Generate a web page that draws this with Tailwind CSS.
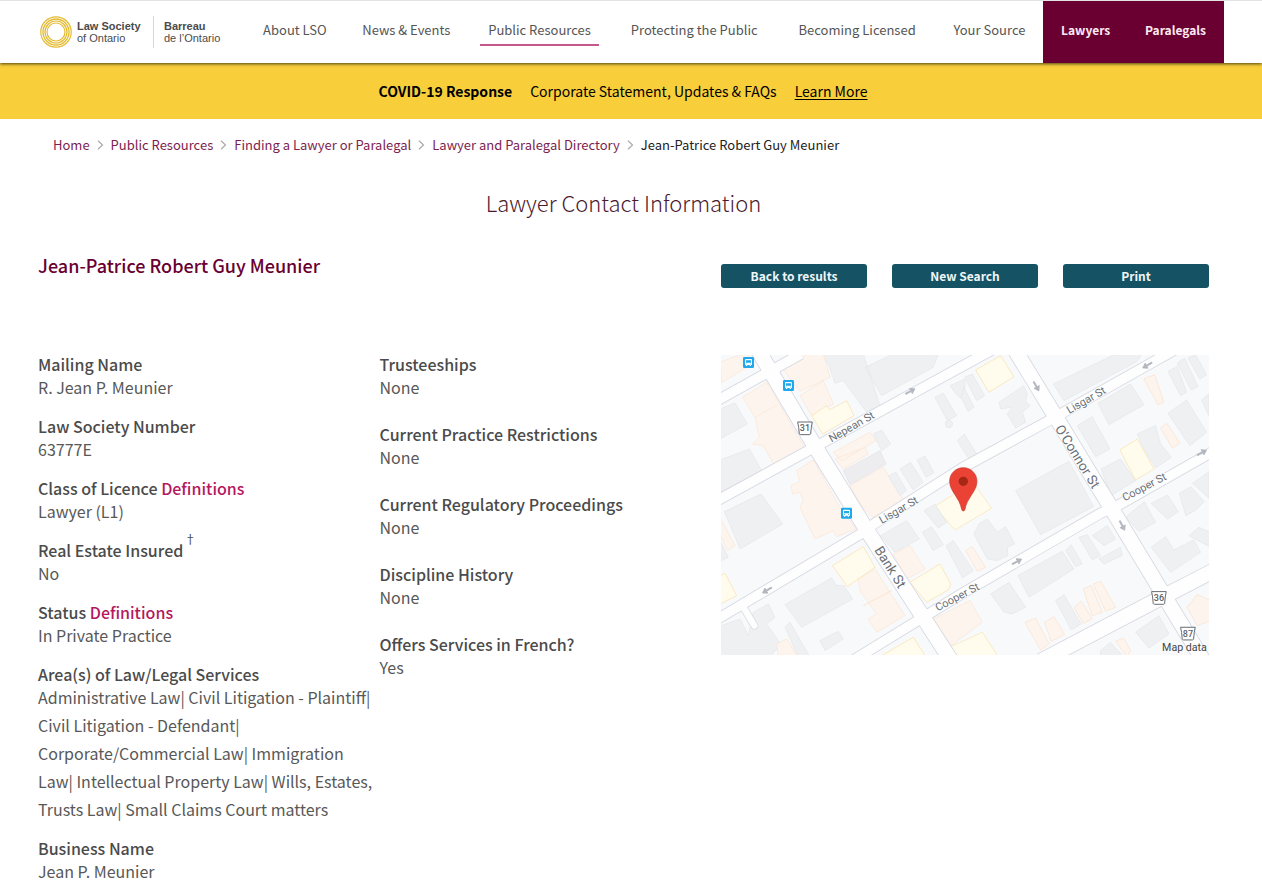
<!DOCTYPE html>
<html lang="en">
<head>
<meta charset="utf-8">
<meta name="viewport" content="width=device-width, initial-scale=1">
<title>Lawyer Contact Information</title>
<script src="https://cdn.jsdelivr.net/npm/@tailwindcss/browser@4"></script>
</head>
<body class="bg-white font-['Noto_Sans_CJK_SC','Noto_Sans',sans-serif] text-[#4b4b4b]">

<header class="relative z-10 flex h-[63px] items-stretch border-t border-[#e3e3e3] bg-white pl-10 pr-[38px] shadow-[0_1px_3px_rgba(0,0,0,0.7)]">
  <a href="#" class="flex w-[206px] shrink-0 items-center font-['Liberation_Sans',Arial,sans-serif] text-xs leading-3" aria-label="Law Society of Ontario">
    <svg class="size-8 shrink-0" viewBox="0 0 32 32" fill="none" stroke="#e3bb33" aria-hidden="true">
      <circle cx="16" cy="16" r="15.2" stroke-width="1.2"/>
      <circle cx="16" cy="16" r="13" stroke-width="1.3"/>
      <circle cx="16" cy="16" r="11" stroke-width="1.2"/>
      <circle cx="16" cy="16" r="9" stroke-width="1.2"/>
    </svg>
    <span class="ml-[5px] w-[66px] whitespace-nowrap text-[11px]"><b class="block">Law Society</b><span class="block">of Ontario</span></span>
    <span class="ml-[10px] h-8 border-l border-[#d5d5d5]"></span>
    <span class="ml-[10px] whitespace-nowrap text-[11px]"><b class="block">Barreau</b><span class="block">de l’Ontario</span></span>
  </a>
  <nav class="flex-1" aria-label="Main">
    <ul class="table h-full w-full whitespace-nowrap text-center text-[13px] leading-5 text-[#555]">
      <li class="table-cell px-3 pt-[19px]"><a href="#">About LSO</a></li>
      <li class="table-cell px-3 pt-[19px]"><a href="#">News &amp; Events</a></li>
      <li class="table-cell px-3 pt-[19px]"><a href="#" class="-mx-2 inline-block border-b-2 border-[#c4588a] px-2 pb-1">Public Resources</a></li>
      <li class="table-cell px-3 pt-[19px]"><a href="#">Protecting the Public</a></li>
      <li class="table-cell px-3 pt-[19px]"><a href="#">Becoming Licensed</a></li>
      <li class="table-cell px-3 pt-[19px]"><a href="#">Your Source</a></li>
    </ul>
  </nav>
  <div class="flex w-[181px] shrink-0 justify-between bg-[#690031] px-[18px] pt-[19px] text-xs font-bold leading-5 text-[#fbeaf2]">
    <a href="#" class="leading-5">Lawyers</a>
    <a href="#" class="leading-5">Paralegals</a>
  </div>
</header>

<section class="flex h-14 items-center justify-center gap-[18px] bg-[#f8ce3b] pr-4 text-sm text-black">
  <strong class="font-bold">COVID-19 Response</strong>
  <span>Corporate Statement, Updates &amp; FAQs</span>
  <a href="#" class="underline underline-offset-2">Learn More</a>
</section>

<main class="pl-[38px] pr-[53px]">
  <nav aria-label="Breadcrumb" class="pt-4 pl-[15px]">
    <ol class="flex items-center gap-[7px] text-[13px] leading-5 text-[#7c1e50]">
      <li><a href="#">Home</a></li>
      <li aria-hidden="true"><svg class="h-2.5 w-[7px]" viewBox="0 0 7 10" fill="none" stroke="#aaa" stroke-width="1.2"><path d="M1 .8 5.5 5 1 9.2"/></svg></li>
      <li><a href="#">Public Resources</a></li>
      <li aria-hidden="true"><svg class="h-2.5 w-[7px]" viewBox="0 0 7 10" fill="none" stroke="#aaa" stroke-width="1.2"><path d="M1 .8 5.5 5 1 9.2"/></svg></li>
      <li><a href="#">Finding a Lawyer or Paralegal</a></li>
      <li aria-hidden="true"><svg class="h-2.5 w-[7px]" viewBox="0 0 7 10" fill="none" stroke="#aaa" stroke-width="1.2"><path d="M1 .8 5.5 5 1 9.2"/></svg></li>
      <li><a href="#">Lawyer and Paralegal Directory</a></li>
      <li aria-hidden="true"><svg class="h-2.5 w-[7px]" viewBox="0 0 7 10" fill="none" stroke="#aaa" stroke-width="1.2"><path d="M1 .8 5.5 5 1 9.2"/></svg></li>
      <li class="text-[#222]" aria-current="page">Jean-Patrice Robert Guy Meunier</li>
    </ol>
  </nav>

  <h1 class="mt-[31px] text-center text-[22px] font-light leading-8 text-[#4c1a30]">Lawyer Contact Information</h1>

  <div class="mt-[33px] grid grid-cols-[14fr_10fr]">
    <h2 class="text-lg font-medium leading-7 text-[#690031]">Jean-Patrice Robert Guy Meunier</h2>
    <div class="mt-[13px] grid grid-cols-3 gap-[25px] text-xs font-bold leading-6 text-[#eef6f8]">
      <button type="button" class="h-6 rounded-[3px] bg-[#155263]">Back to results</button>
      <button type="button" class="h-6 rounded-[3px] bg-[#155263]">New Search</button>
      <button type="button" class="h-6 rounded-[3px] bg-[#155263]">Print</button>
    </div>
  </div>

  <div class="mt-[67px] grid grid-cols-[7fr_7fr_10fr] items-start">
    <dl class="flex flex-col gap-4 text-base">
      <div><dt class="font-medium leading-[18px]">Mailing Name</dt><dd class="leading-7 text-[#585858]">R. Jean P. Meunier</dd></div>
      <div><dt class="font-medium leading-[18px]">Law Society Number</dt><dd class="leading-7 text-[#585858]">63777E</dd></div>
      <div><dt class="font-medium leading-[18px]">Class of Licence <a href="#" class="text-[#b5175e]">Definitions</a></dt><dd class="leading-7 text-[#585858]">Lawyer (L1)</dd></div>
      <div><dt class="relative font-medium leading-[18px]">Real Estate Insured <span class="absolute -top-2 ml-px text-xs font-normal leading-3">†</span></dt><dd class="leading-7 text-[#585858]">No</dd></div>
      <div><dt class="font-medium leading-[18px]">Status <a href="#" class="text-[#b5175e]">Definitions</a></dt><dd class="leading-7 text-[#585858]">In Private Practice</dd></div>
      <div><dt class="font-medium leading-[18px]">Area(s) of Law/Legal Services</dt><dd class="leading-7 text-[#585858]">Administrative Law| Civil Litigation - Plaintiff| Civil Litigation - Defendant| Corporate/Commercial Law| Immigration Law| Intellectual Property Law| Wills, Estates, Trusts Law| Small Claims Court matters</dd></div>
      <div><dt class="font-medium leading-[18px]">Business Name</dt><dd class="leading-7 text-[#585858]">Jean P. Meunier</dd></div>
    </dl>
    <dl class="flex flex-col gap-6 text-base">
      <div><dt class="font-medium leading-[18px]">Trusteeships</dt><dd class="leading-7 text-[#585858]">None</dd></div>
      <div><dt class="font-medium leading-[18px]">Current Practice Restrictions</dt><dd class="leading-7 text-[#585858]">None</dd></div>
      <div><dt class="font-medium leading-[18px]">Current Regulatory Proceedings</dt><dd class="leading-7 text-[#585858]">None</dd></div>
      <div><dt class="font-medium leading-[18px]">Discipline History</dt><dd class="leading-7 text-[#585858]">None</dd></div>
      <div><dt class="font-medium leading-[18px]">Offers Services in French?</dt><dd class="leading-7 text-[#585858]">Yes</dd></div>
    </dl>

    <!-- Street map, drawn at three units per pixel -->
    <svg class="block h-auto w-full overflow-hidden" viewBox="0 0 1464 900" role="img" aria-label="Map of Bank St and Lisgar St">
      <defs>
        <g id="roads" fill="none">
          <path d="M-30 147 L240 -3"/>
          <path d="M-30 447 L840 -30"/>
          <path d="M-30 804 L417 538 L462 505 L729 336 L978 200 L1380 -26"/>
          <path d="M390 920 L579 804 L732 711 L1140 474 L1194 450 L1500 276"/>
        </g>
        <g id="avenues" fill="none">
          <path d="M102 -30 L276 264 L441 531 L699 930"/>
          <path d="M873 -30 L1158 438 L1455 930"/>
          <path d="M960 918 L1302 738 L1500 636"/>
        </g>
        <g id="bus">
          <rect width="33" height="33" rx="4" fill="#1fa8ec"/>
          <path d="M9 6h15q3 0 3 3v15h-3v3h-4v-3h-7v3H9v-3H6V9q0-3 3-3Z" fill="#fff"/>
          <path d="M9 10h15v7H9zM9 20h3v2H9zM21 20h3v2h-3z" fill="#1fa8ec"/>
        </g>
        <path id="arrow" d="M-16 -2H2V-9L16 0 2 9V2H-16Z" fill="#b3b5bf" stroke="#b3b5bf" stroke-width="2"/>
        <path id="shield" d="M-22 -18H22L19 -2 17 18Q16 20 13 20H-13Q-16 20 -17 18L-19 -2Z" fill="#fff" stroke="#666a70" stroke-width="3"/>
      </defs>
      <rect width="1464" height="900" fill="#f8f9fb"/>

      <g fill="#eff0f2" stroke="#e4e6ea" stroke-width="2">
        <path d="M884 407 1044 319 1118 455 959 539ZM10 470 120 417 185 507 57 582Z"/>
        <path d="M1214 487 1270 440 1304 502 1254 529ZM1290 445 1340 420 1372 470 1340 492ZM1375 415 1410 395 1450 440 1425 465 1395 482ZM1415 385 1464 350V430Z"/>
        <path d="M1141 342 1199 312 1244 377 1169 422Z"/>
      </g>
      <g fill="#fdf5ed" stroke="#fae4d2" stroke-width="2">
        <path d="M227 347 277 315 355 455 405 522 347 545 337 527 282 552 237 457 247 437 237 412 215 417 210 392 237 380Z"/>
        <path d="M387 392 487 337 545 430 530 450 455 487 420 450ZM637 792 747 737 784 802 690 872Z"/>
      </g>
      <path d="M640 455 757 382 812 460 702 525ZM690 875 784 832 835 910H710Z" fill="#fffcee" stroke="#f9e3ad" stroke-width="2"/>

      <g transform="translate(-3 -3)" stroke-width="2">
        <g fill="#eff0f2" stroke="#e4e6ea">
          <path d="M0 165 45 147 82 210 0 255ZM0 318 88 285 125 350 0 415Z"/>
          <path d="M300 0H430L480 155 440 175 370 80 345 88 325 30ZM435 40 520 0H655L640 40 485 125Z"/>
          <path d="M645 130 670 118 710 185 682 200ZM690 95 735 75V140L712 125ZM460 240 485 228 512 270 485 290ZM505 365 528 355 560 410 540 425ZM540 345 572 325 610 385 580 408ZM592 318 615 306 642 356 618 370ZM712 260 733 240 770 300 747 315Z"/>
          <circle cx="687" cy="210" r="11"/>
        </g>
        <g fill="#fdf5ed" stroke="#fae4d2">
          <path d="M0 25 65 0H110L90 35 5 85ZM68 130 140 85 178 150 255 285 160 330 130 275 98 270 118 250 105 190ZM105 190 172 153"/>
          <path d="M185 40 265 0H310L330 70 240 112ZM240 125 310 80 340 150 275 185ZM340 295 450 235 468 260 365 320ZM345 315 435 280 445 300 370 345Z"/>
        </g>
        <path d="M370 350 480 290 498 330 390 392Z" fill="#ededf0" stroke="#e2e3e8"/>
        <path d="M275 185 320 155 328 168 380 140 402 185 308 240Z" fill="#fffcee" stroke="#f9e0a5"/>
      </g>
      <g transform="translate(729 -3)" stroke-width="2">
        <g fill="#eff0f2" stroke="#e4e6ea">
          <path d="M2 70 25 60 62 125 38 140ZM0 100 30 160 12 172-8 130ZM105 145 180 95 190 120 185 140 198 155 175 175 185 205 155 222 130 180 145 160 110 165ZM268 90 455 0H535L520 22 300 140Z"/>
          <path d="M402 148 500 90 540 152 435 212ZM340 215 385 188 438 285 395 308ZM612 52 640 38 668 115 650 125ZM640 28 662 12 702 98 682 108ZM672 12 695 2 728 62 708 75ZM612 178 668 138 728 235 678 275ZM712 138 735 120V185ZM520 240 575 215 590 270 622 310 575 342 540 285Z"/>
        </g>
        <path d="M590 222 608 207 648 268 625 282ZM540 75 572 62 600 145 582 152Z" fill="#fdf5ed" stroke="#fae0c8"/>
        <path d="M35 48 110 5 150 68 75 115ZM468 288 520 255 570 345 515 378Z" fill="#fffcee" stroke="#f9e0a5"/>
      </g>
      <g transform="translate(-3 447)" stroke-width="2">
        <g fill="#eff0f2" stroke="#e4e6ea">
          <path d="M0 110 25 160 0 172ZM195 302 335 222 350 245 372 245 398 285 245 370ZM300 410 355 382 370 405 315 440ZM100 325 145 300 165 340 140 360 182 420 150 460H-10V370L60 345 85 395Z"/>
          <path d="M482 95 560 50 598 105 525 145ZM612 20 645 0 680 55 655 72ZM607 85 635 68 670 122 640 140ZM678 125 700 110 760 200 728 222ZM195 370 210 355 270 460H235Z"/>
        </g>
        <g fill="#fdf5ed" stroke="#fae4d2">
          <path d="M0 40 45 125 22 140 0 90ZM415 225 465 195 555 335 470 385 445 345 470 330 420 260ZM430 305 515 260ZM520 150 570 125 615 195 560 225ZM170 420 200 405 235 460H175Z"/>
        </g>
        <path d="M338 185 430 128 465 190 382 248ZM570 235 660 180 692 240 685 258 620 295ZM0 215 15 208 50 275 0 300ZM485 455 580 400 615 455Z" fill="#fffcee" stroke="#f9e0a5"/>
      </g>
      <g transform="translate(729 447)" stroke-width="2">
        <g fill="#eff0f2" stroke="#e4e6ea">
          <path d="M45 60 70 45 100 85 125 68 152 120 130 130 132 155 100 170 70 165 30 90ZM162 215 295 142 330 195 195 280ZM80 270 135 235 185 310 145 330 120 325ZM305 140 322 122 355 180 335 188ZM345 100 370 92 410 155 385 168ZM385 95 430 65 455 105 420 125ZM405 165 470 130 475 155 420 180Z"/>
          <path d="M275 290 300 272 352 360 322 378ZM562 130 605 98 630 138 690 108 710 145 620 205ZM675 95 705 70 740 85V130ZM515 385 585 335 615 390 555 432ZM410 440 440 415 480 460H410Z"/>
        </g>
        <path d="M5 140 25 128 65 190 40 202ZM183 355 215 342 255 420 230 438ZM242 355 270 338 302 392 262 412ZM330 310 352 292 385 345 358 358ZM358 255 382 245 415 325 385 335ZM388 240 410 232 455 310 425 322ZM670 310 700 272 740 290V350L700 365ZM455 412 480 402 500 440 490 460Z" fill="#fdf5ed" stroke="#fae0c8"/>
      </g>

      <path d="M72 765 100 812" fill="none" stroke="#d9dce5" stroke-width="24" stroke-linecap="round"/>
      <use href="#roads" stroke="#d5d8e2" stroke-width="34"/>
      <use href="#avenues" stroke="#d5d8e2" stroke-width="49"/>
      <use href="#roads" stroke="#fefefe" stroke-width="29"/>
      <use href="#avenues" stroke="#fefefe" stroke-width="44"/>
      <path d="M70 762 100 812" fill="none" stroke="#fefefe" stroke-width="19" stroke-linecap="round"/>

      <use href="#arrow" transform="translate(568 109) rotate(-28)"/>
      <use href="#arrow" transform="translate(1279 31) rotate(150)"/>
      <use href="#arrow" transform="translate(946 94) rotate(60)"/>
      <use href="#arrow" transform="translate(1443 293) rotate(-28)"/>
      <use href="#arrow" transform="translate(138 706) rotate(150)"/>
      <use href="#arrow" transform="translate(888 620) rotate(-28)"/>
      <use href="#arrow" transform="translate(1204 512) rotate(62)"/>

      <use href="#bus" x="66" y="6"/>
      <use href="#bus" x="186" y="75"/>
      <use href="#bus" x="360" y="458"/>

      <g font-family="Roboto, sans-serif" font-size="33" fill="#6b6f76" stroke="#fff" stroke-width="5" paint-order="stroke" stroke-linejoin="round" text-anchor="middle">
        <text transform="translate(397 225) rotate(-30)">Nepean St</text>
        <text transform="translate(538 475) rotate(-30)">Lisgar St</text>
        <text transform="translate(1101 145) rotate(-30)">Lisgar St</text>
        <text transform="translate(714 736) rotate(-28)">Cooper St</text>
        <text transform="translate(1275 406) rotate(-28)">Cooper St</text>
        <text font-size="41" transform="translate(1058 312) rotate(58)">O'Connor St</text>
        <text font-size="41" transform="translate(496 644) rotate(58)">Bank St</text>
      </g>
      <g font-family="Roboto, sans-serif" font-size="27" font-weight="500" fill="#5a5d63" text-anchor="middle">
        <use href="#shield" x="252" y="219"/><text x="252" y="229">31</text>
        <use href="#shield" x="1314" y="728"/><text x="1314" y="738">36</text>
        <use href="#shield" x="1401" y="835"/><text x="1401" y="845">87</text>
      </g>
      <text x="1458" y="887" text-anchor="end" font-family="Roboto, sans-serif" font-size="32" fill="#444">Map data</text>

      <path d="M727 338c23 0 41 18 41 41 0 30-30 49-36 84q-1 5-5 5t-5-5c-6-35-36-54-36-84 0-23 18-41 41-41Z" fill="#ea4335" stroke="#c5352a" stroke-width="2"/>
      <circle cx="727" cy="379" r="14" fill="#a52714"/>
    </svg>
  </div>
</main>
</body>
</html>
